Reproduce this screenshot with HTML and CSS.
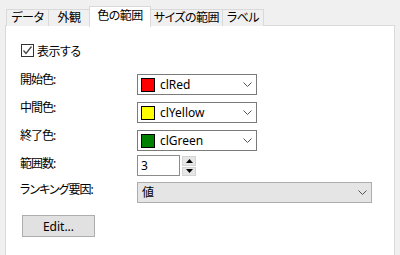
FILE: index.html
```html
<!DOCTYPE html>
<html lang="ja">

<head>
    <meta charset="UTF-8">
    <meta name="viewport" content="width=device-width, initial-scale=1.0">
    <title>色の範囲</title>
    <link rel="stylesheet" href="styles.css">
</head>

<body>

    <div class="tabs">
        <div class="tab">データ</div>
        <div class="tab">外観</div>
        <div class="tab active">色の範囲</div>
        <div class="tab">サイズの範囲</div>
        <div class="tab">ラベル</div>
    </div>

    <div class="panel">
        <label class="check">
            <span class="box">
                <svg width="11" height="11" viewBox="0 0 11 11">
                    <polyline points="1.5,5.5 4,8.5 9.5,1.5" fill="none" stroke="#444" stroke-width="1.3"/>
                </svg>
            </span>
            表示する
        </label>

        <div class="form">
            <span class="lbl">開始色:</span>
            <div class="combo">
                <span class="swatch" style="background:#ff0000"></span>
                <span class="val">clRed</span>
                <svg class="chev" width="9" height="5" viewBox="0 0 9 5"><polyline points="0.5,0.5 4.5,4.5 8.5,0.5" fill="none" stroke="#555"/></svg>
            </div>

            <span class="lbl">中間色:</span>
            <div class="combo">
                <span class="swatch" style="background:#ffff00"></span>
                <span class="val">clYellow</span>
                <svg class="chev" width="9" height="5" viewBox="0 0 9 5"><polyline points="0.5,0.5 4.5,4.5 8.5,0.5" fill="none" stroke="#555"/></svg>
            </div>

            <span class="lbl">終了色:</span>
            <div class="combo">
                <span class="swatch" style="background:#008000"></span>
                <span class="val">clGreen</span>
                <svg class="chev" width="9" height="5" viewBox="0 0 9 5"><polyline points="0.5,0.5 4.5,4.5 8.5,0.5" fill="none" stroke="#555"/></svg>
            </div>

            <span class="lbl low">範囲数:</span>
            <div class="spin">
                <div class="spin-input">3</div>
                <div class="spin-btns">
                    <span class="spin-btn"><svg width="7" height="4" viewBox="0 0 7 4"><polygon points="0,4 7,4 3.5,0" fill="#000"/></svg></span>
                    <span class="spin-btn"><svg width="7" height="4" viewBox="0 0 7 4"><polygon points="0,0 7,0 3.5,4" fill="#000"/></svg></span>
                </div>
            </div>

            <span class="lbl flat">ランキング要因:</span>
            <div class="combo wide">
                <span class="val">値</span>
                <svg class="chev" width="9" height="5" viewBox="0 0 9 5"><polyline points="0.5,0.5 4.5,4.5 8.5,0.5" fill="none" stroke="#555"/></svg>
            </div>
        </div>

        <button class="btn">Edit...</button>
    </div>

</body>

</html>
```

FILE: styles.css
```css
body {
    margin: 0;
    background: #f0f0f0;
    font-family: "Noto Sans", "Noto Sans CJK JP", sans-serif;
    font-size: 12px;
    font-feature-settings: "palt";
    color: #000;
    overflow: hidden;
}

/* tab strip: widths follow the original control */
.tabs {
    display: flex;
    align-items: flex-end;
    height: 20px;
    padding: 6px 0 0 6px;
}

.tab {
    box-sizing: border-box;
    height: 17px;
    line-height: 16px;
    text-align: center;
    border: 1px solid #d9d9d9;
    border-bottom: 0;
    margin-left: -1px;
    background: #f0f0f0;
    white-space: nowrap;
    letter-spacing: -0.5px;
}

.tab:first-child {
    margin-left: 0;
    width: 43px;
}

.tab:nth-child(2) { width: 42px; }
.tab:nth-child(4) { width: 73px; }
.tab:nth-child(5) { width: 42px; }

.tab.active {
    position: relative;
    z-index: 1;
    width: 62px;
    height: 21px;
    line-height: 18px;
    margin-bottom: -1px;
    background: #fff;
}

.panel {
    margin: -1px 0 0 5px;
    width: 360px;
    height: 240px;
    padding: 18px 14px 0;
    background: #fff;
    border: 1px solid #d9d9d9;
}

.check {
    display: flex;
    align-items: center;
    gap: 3px;
    height: 13px;
    margin-left: 1px;
    letter-spacing: -0.5px;
}

.box {
    width: 11px;
    height: 11px;
    border: 1px solid #333;
    display: flex;
}

.form {
    display: grid;
    grid-template-columns: 117px auto;
    grid-template-rows: 28px 28px 25px 27px 21px;
    margin-top: 17px;
}

.lbl {
    line-height: 16px;
    margin-top: -2px;
    white-space: nowrap;
    letter-spacing: -1px;
}

.lbl.low {
    margin-top: 1px;
}

.lbl.flat {
    margin-top: 0;
}

.combo {
    display: flex;
    align-items: center;
    width: 111px;
    height: 19px;
    padding: 0 4px 0 3px;
    border: 1px solid #7a7a7a;
    background: #fff;
}

.combo .val {
    flex: 1;
    line-height: 16px;
}

.swatch {
    width: 12px;
    height: 12px;
    border: 1px solid #000;
    margin-right: 5px;
}

.combo.wide {
    width: 225px;
    padding-left: 4px;
    border-color: #adadad;
    background: #e5e5e5;
}

.spin {
    display: flex;
    gap: 2px;
    height: 21px;
}

.spin-input {
    width: 38px;
    height: 19px;
    line-height: 19px;
    padding-left: 3px;
    border: 1px solid #8c8c8c;
}

.spin-btns {
    display: flex;
    flex-direction: column;
    gap: 1px;
    padding-top: 1px;
}

.spin-btn {
    width: 12px;
    height: 8px;
    border: 1px solid #d4d4d4;
    background: #e6e6e6;
    display: flex;
    align-items: center;
    justify-content: center;
}

.btn {
    display: block;
    margin: 12px 0 0 2px;
    width: 73px;
    height: 22px;
    padding: 0;
    border: 1px solid #adadad;
    background: #e1e1e1;
    font-family: inherit;
    font-size: 12px;
    color: #000;
}
```
